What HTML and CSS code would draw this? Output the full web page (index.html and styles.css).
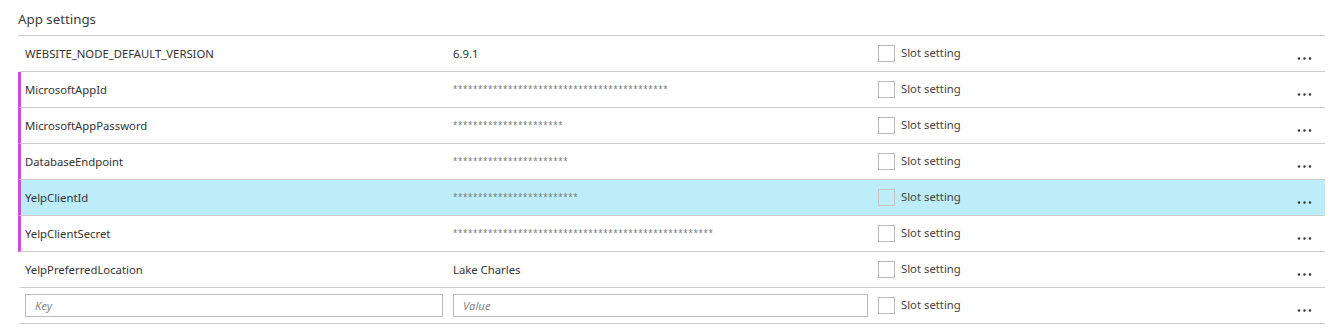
FILE: index.html
```html
<!DOCTYPE html>
<html>
<head>
<meta charset="utf-8">
<link rel="stylesheet" href="styles.css">
</head>
<body>
<div class="panel">
  <div class="title">App settings</div>
  <div class="row">
    <div class="key">WEBSITE_NODE_DEFAULT_VERSION</div>
    <div class="val">6.9.1</div>
    <label class="slot"><span class="box"></span><span class="slot-text">Slot setting</span></label>
    <div class="more"><svg width="16" height="3" viewBox="0 0 16 3"><circle cx="2" cy="1.5" r="1.2"/><circle cx="7.5" cy="1.5" r="1.2"/><circle cx="13" cy="1.5" r="1.2"/></svg></div>
  </div>
  <div class="row marked">
    <div class="key">MicrosoftAppId</div>
    <div class="val mask">*******************************************</div>
    <label class="slot"><span class="box"></span><span class="slot-text">Slot setting</span></label>
    <div class="more"><svg width="16" height="3" viewBox="0 0 16 3"><circle cx="2" cy="1.5" r="1.2"/><circle cx="7.5" cy="1.5" r="1.2"/><circle cx="13" cy="1.5" r="1.2"/></svg></div>
  </div>
  <div class="row marked">
    <div class="key">MicrosoftAppPassword</div>
    <div class="val mask">**********************</div>
    <label class="slot"><span class="box"></span><span class="slot-text">Slot setting</span></label>
    <div class="more"><svg width="16" height="3" viewBox="0 0 16 3"><circle cx="2" cy="1.5" r="1.2"/><circle cx="7.5" cy="1.5" r="1.2"/><circle cx="13" cy="1.5" r="1.2"/></svg></div>
  </div>
  <div class="row marked">
    <div class="key">DatabaseEndpoint</div>
    <div class="val mask">***********************</div>
    <label class="slot"><span class="box"></span><span class="slot-text">Slot setting</span></label>
    <div class="more"><svg width="16" height="3" viewBox="0 0 16 3"><circle cx="2" cy="1.5" r="1.2"/><circle cx="7.5" cy="1.5" r="1.2"/><circle cx="13" cy="1.5" r="1.2"/></svg></div>
  </div>
  <div class="row marked selected">
    <div class="key">YelpClientId</div>
    <div class="val mask">*************************</div>
    <label class="slot"><span class="box"></span><span class="slot-text">Slot setting</span></label>
    <div class="more"><svg width="16" height="3" viewBox="0 0 16 3"><circle cx="2" cy="1.5" r="1.2"/><circle cx="7.5" cy="1.5" r="1.2"/><circle cx="13" cy="1.5" r="1.2"/></svg></div>
  </div>
  <div class="row marked">
    <div class="key">YelpClientSecret</div>
    <div class="val mask">****************************************************</div>
    <label class="slot"><span class="box"></span><span class="slot-text">Slot setting</span></label>
    <div class="more"><svg width="16" height="3" viewBox="0 0 16 3"><circle cx="2" cy="1.5" r="1.2"/><circle cx="7.5" cy="1.5" r="1.2"/><circle cx="13" cy="1.5" r="1.2"/></svg></div>
  </div>
  <div class="row">
    <div class="key">YelpPreferredLocation</div>
    <div class="val">Lake Charles</div>
    <label class="slot"><span class="box"></span><span class="slot-text">Slot setting</span></label>
    <div class="more"><svg width="16" height="3" viewBox="0 0 16 3"><circle cx="2" cy="1.5" r="1.2"/><circle cx="7.5" cy="1.5" r="1.2"/><circle cx="13" cy="1.5" r="1.2"/></svg></div>
  </div>
  <div class="row new">
    <div class="cell-input"><input class="field" type="text" placeholder="Key"></div>
    <div class="cell-input"><input class="field" type="text" placeholder="Value"></div>
    <label class="slot"><span class="box"></span><span class="slot-text">Slot setting</span></label>
    <div class="more"><svg width="16" height="3" viewBox="0 0 16 3"><circle cx="2" cy="1.5" r="1.2"/><circle cx="7.5" cy="1.5" r="1.2"/><circle cx="13" cy="1.5" r="1.2"/></svg></div>
  </div>
</div>
</body>
</html>
```
FILE: styles.css
```css
* { box-sizing: border-box; }
html, body { margin: 0; padding: 0; background: #fff; }
body {
  font-family: "Noto Sans", "Open Sans", sans-serif;
  font-size: 11.3px;
  color: #333;
}
.panel {
  margin-left: 18px;
  width: 1307px;
}
.title {
  height: 36px;
  padding-top: 9px;
  font-size: 13.3px;
  line-height: 20px;
  color: #3c3c3c;
  border-bottom: 1px solid #cccccc;
}
.row {
  display: grid;
  grid-template-columns: 418px 415px 1fr auto;
  column-gap: 10px;
  height: 36px;
  padding-left: 4px;
  padding-right: 12px;
  border-left: 3px solid transparent;
  border-bottom: 1px solid #cccccc;
}
.row.marked { border-left-color: #c94edb; }
.row.selected { background: #bdedf9; }
.key, .val {
  line-height: 35px;
  white-space: nowrap;
  overflow: hidden;
  color: #333;
}
.val.mask {
  font-size: 8px;
  letter-spacing: 0.6px;
  color: #777;
  line-height: 33px;
}
.slot {
  display: flex;
  align-items: flex-start;
  padding-top: 9px;
}
.box {
  width: 17px;
  height: 17px;
  border: 1px solid #bbbbbb;
  background: #fff;
  flex: none;
}
.selected .box { background: transparent; border-color: #c5c5c5; }
.slot-text {
  margin-left: 6px;
  line-height: 16px;
  color: #444;
}
.more {
  padding-top: 21px;
}
.more svg { display: block; fill: #333; }
.cell-input { padding-top: 6px; }
.field {
  display: block;
  width: 100%;
  height: 23px;
  margin: 0;
  border: 1px solid #bdbdbd;
  padding: 0 9px;
  font-family: inherit;
  font-size: 11.3px;
  color: #333;
  background: #fff;
  outline: none;
}
.field::placeholder { color: #888; font-style: italic; }
```
